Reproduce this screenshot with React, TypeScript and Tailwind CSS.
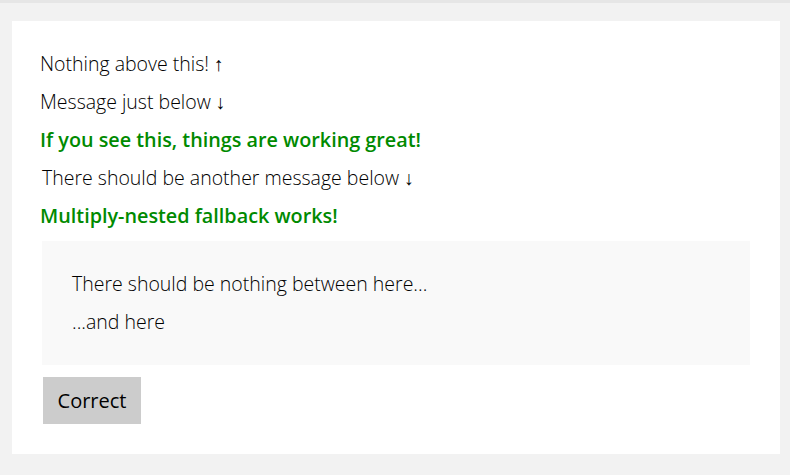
import React from 'react';

const lines = [
  { text: 'Nothing above this! ↑', green: false, indent: false },
  { text: 'Message just below ↓', green: false, indent: false },
  { text: 'If you see this, things are working great!', green: true, indent: false },
  { text: 'There should be another message below ↓', green: false, indent: true },
  { text: 'Multiply-nested fallback works!', green: true, indent: false },
];

export default function App() {
  return (
    <div
      className="min-h-[475px] bg-[#f2f2f2] text-[19.5px]"
      style={{ fontFamily: '"Open Sans", "Noto Sans", sans-serif' }}
    >
      <div className="h-[3px] bg-[#e6e6e6]" />
      <div className="pl-3 pr-[10px] pt-[18px] pb-[21px]">
        <div className="bg-white pl-[28px] pr-[30px] pt-[24px] pb-[30px]">
          {lines.map((l) => (
            <div
              key={l.text}
              className={`h-[38px] leading-[38px] whitespace-nowrap ${
                l.green ? 'font-semibold text-[#008a00] text-[19.8px]' : 'font-light text-black'
              } ${l.indent ? 'pl-[2px]' : ''}`}
            >
              {l.text}
            </div>
          ))}
          <div className="ml-[2px] mt-[6px] bg-[#f9f9f9] px-[30px] py-[24px] font-light text-black">
            <div className="h-[38px] leading-[38px]">There should be nothing between here...</div>
            <div className="h-[38px] leading-[38px]">...and here</div>
          </div>
          <button className="ml-[3px] mt-[12px] h-[47px] w-[98px] bg-[#cccccc] text-[20px] text-black">
            Correct
          </button>
        </div>
      </div>
    </div>
  );
}
